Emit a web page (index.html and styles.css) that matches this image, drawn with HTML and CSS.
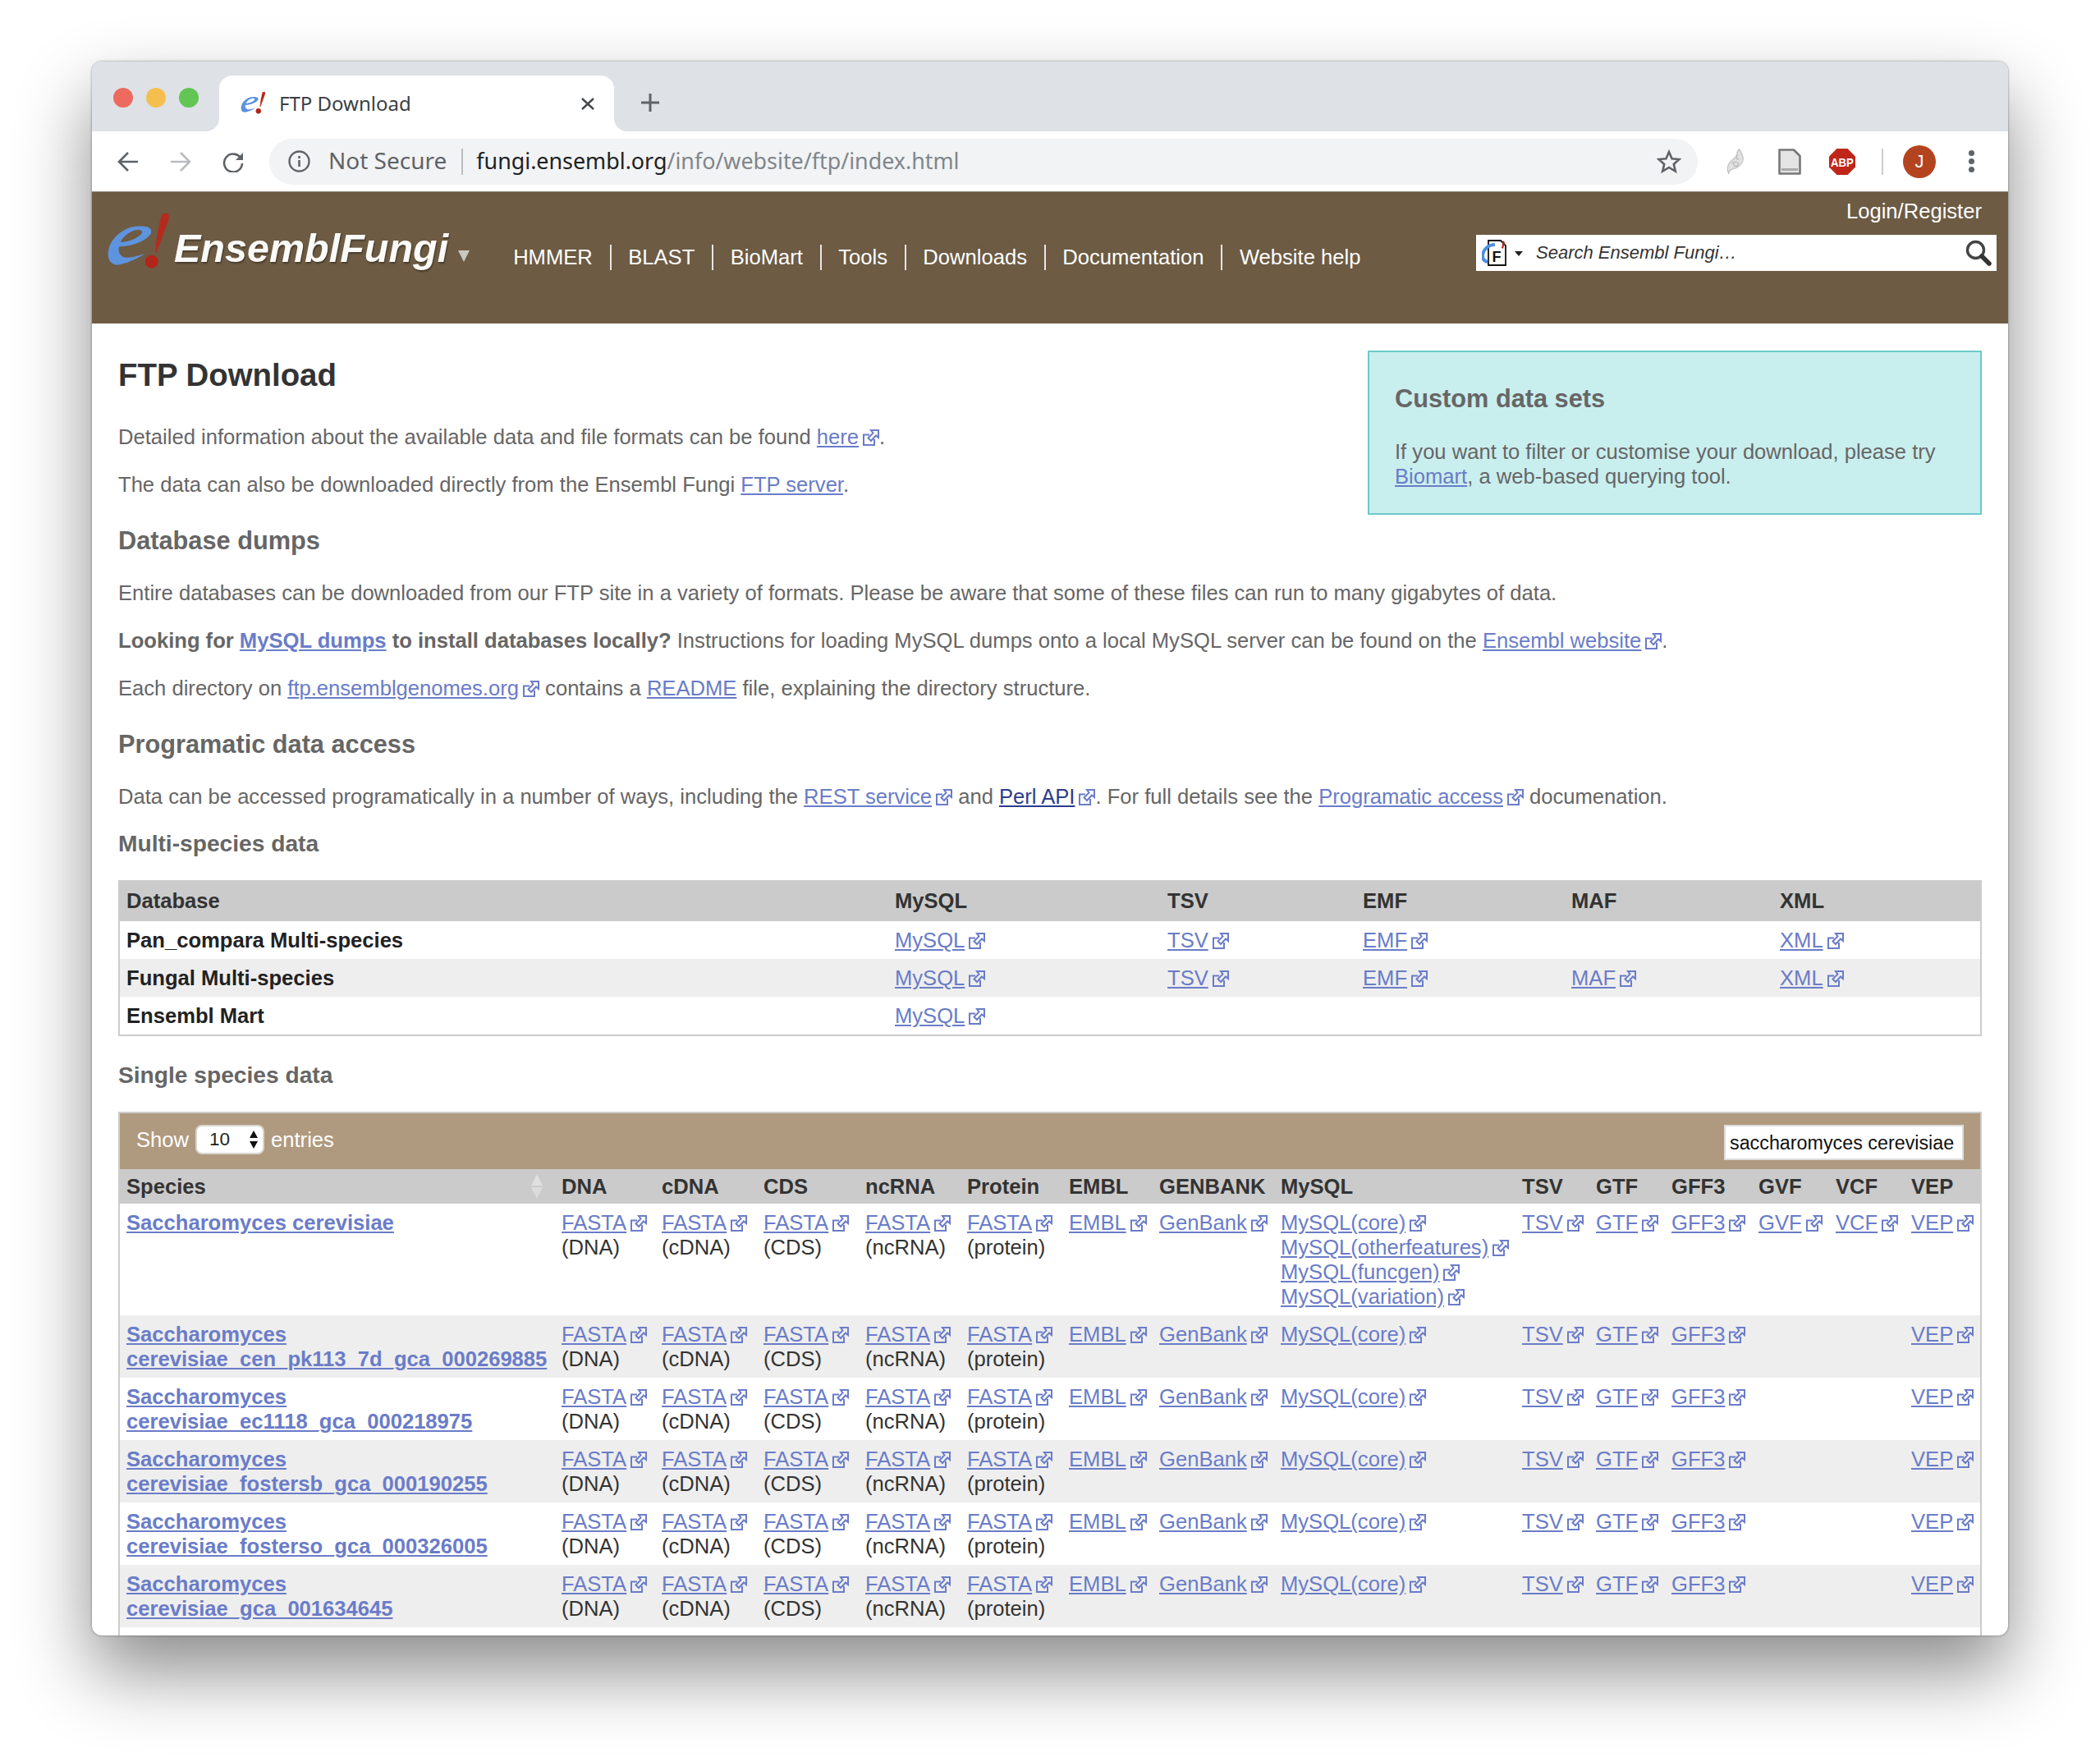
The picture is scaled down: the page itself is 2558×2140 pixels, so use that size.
FILE: index.html
```html
<!DOCTYPE html>
<html lang="en">
<head>
    <meta charset="UTF-8">
    <title>FTP Download</title>
    <link rel="stylesheet" href="styles.css">
</head>

<body>
    <svg class="defs" width="0" height="0">
        <symbol id="ext" viewBox="0 0 20 20">
            <path d="M8 6.5H1V19H14V12" fill="none" stroke="#6a7cc8" stroke-width="2"/>
            <path d="M10 1H19V10L16 7.5 10 14 6.5 10.5 12.5 4.5Z" fill="none" stroke="#6a7cc8" stroke-width="2"/>
        </symbol>
        <symbol id="elogo" viewBox="25 35 235 215">
            <path fill-rule="evenodd" fill="#5e93dd" d="M165 190C130 215 90 228 65 232C35 232 25 205 32 175C42 130 90 92 140 90C170 88 195 95 188 115C178 140 120 165 70 165C66 185 75 205 100 205C125 205 150 195 165 190ZM75 148C110 148 150 128 155 112C155 100 130 102 115 110C95 120 82 135 75 148Z"/>
            <path d="M226 50Q238 36 252 46Q256 60 246 82L208 185H203Q208 120 226 50Z" fill="#b52a1d"/>
            <circle cx="190" cy="220" r="24" fill="#b32519"/>
        </symbol>
    </svg>

    <div class="window">
        <div class="tabstrip">
            <div class="lights">
                <span class="light red"></span>
                <span class="light yellow"></span>
                <span class="light green"></span>
            </div>
            <div class="tab">
                <svg class="favicon"><use href="#elogo"/></svg>
                <span class="tab-title">FTP Download</span>
                <svg class="tab-close" viewBox="0 0 18 15" preserveAspectRatio="none"><path d="M2 1L16 14M16 1L2 14" stroke="#45484c" stroke-width="2.4"/></svg>
            </div>
            <svg class="newtab" viewBox="0 0 24 24"><path d="M12 1V23M1 12H23" stroke="#5f6368" stroke-width="3"/></svg>
        </div>

        <div class="toolbar">
            <svg class="navbtn" viewBox="0 0 26 26"><path d="M25 13H3M13 2L2 13L13 24" fill="none" stroke="#5f6368" stroke-width="2.6"/></svg>
            <svg class="navbtn" viewBox="0 0 26 26"><path d="M1 13H23M13 2L24 13L13 24" fill="none" stroke="#b9bbbe" stroke-width="2.6"/></svg>
            <svg class="navbtn" viewBox="0 0 26 26"><path d="M22.5 9A11 11 0 1 0 24 15" fill="none" stroke="#5f6368" stroke-width="2.6"/><path d="M25 2V11H16Z" fill="#5f6368"/></svg>
            <div class="omnibox">
                <svg class="info" viewBox="0 0 27 27"><circle cx="13.5" cy="13.5" r="12" fill="none" stroke="#5f6368" stroke-width="2.4"/><path d="M13.5 12V20M13.5 7V10" stroke="#5f6368" stroke-width="2.6"/></svg>
                <span class="not-secure">Not Secure</span>
                <span class="omni-sep"></span>
                <span class="url">fungi.ensembl.org<span class="url-path">/info/website/ftp/index.html</span></span>
                <svg class="star" viewBox="0 0 30 30"><path d="M15 3L18.6 11.2 27.5 12 20.8 17.9 22.8 26.6 15 22 7.2 26.6 9.2 17.9 2.5 12 11.4 11.2Z" fill="none" stroke="#5f6368" stroke-width="2.6"/></svg>
            </div>
            <svg class="feather" viewBox="0 0 22 32"><path d="M16 1C18 6 21 9 20 14C19 20 12 24 7 25C4 26 2 29 3 31C0 26 1 20 5 16C8 13 13 10 13 6C13 4 14 2 16 1Z" fill="#e2e2e2" stroke="#c4c4c4" stroke-width="1.4"/><path d="M6 18C10 15 16 16 14 20C12 23 8 21 9 18M14 8C11 10 12 13 15 13" fill="none" stroke="#bdbdbd" stroke-width="1.5"/></svg>
            <svg class="docicon" viewBox="0 0 28 32"><path d="M1.5 1.5H19L26.5 9V30.5H1.5Z" fill="#e4e4e4" stroke="#777" stroke-width="2.6" stroke-linejoin="round"/><path d="M4 24H24V27H4Z" fill="#aaa"/></svg>
            <svg class="abp" viewBox="0 0 32 32"><path d="M9.5 0H22.5L32 9.5V22.5L22.5 32H9.5L0 22.5V9.5Z" fill="#bf2619"/><text text-anchor="middle" transform="translate(16 21.5) scale(.85 1)" class="abp-text">ABP</text></svg>
            <span class="tool-sep"></span>
            <span class="avatar">J</span>
            <span class="dots"><i></i><i></i><i></i></span>
        </div>

        <div class="masthead">
            <div class="logo">
                <svg class="logo-mark"><use href="#elogo"/></svg>
                <span class="logo-text">EnsemblFungi</span>
                <span class="logo-arrow"></span>
            </div>
            <div class="mainnav">
                <a>HMMER</a>
                <a>BLAST</a>
                <a>BioMart</a>
                <a>Tools</a>
                <a>Downloads</a>
                <a>Documentation</a>
                <a>Website help</a>
            </div>
            <div class="mast-right">
                <a class="login">Login/Register</a>
                <div class="searchbox">
                    <svg class="search-site" viewBox="0 0 30 32">
                        <path d="M8 1H23L29 7V31H8Z" fill="#fff" stroke="#111" stroke-width="1.8"/>
                        <path d="M16 6C8 6 1 12 1 20C1 24 3 26 7 27" fill="none" stroke="#4d8fe0" stroke-width="4"/>
                        <path d="M26 1L28 3 26 11 24 10Z" fill="#b52a1d"/>
                        <text x="18" y="27" text-anchor="middle" class="search-f">F</text>
                    </svg>
                    <span class="search-caret"></span>
                    <span class="search-hint">Search Ensembl Fungi…</span>
                    <svg class="search-glass" viewBox="0 0 32 32"><circle cx="12.5" cy="12.5" r="10" fill="#fff" stroke="#444" stroke-width="3.4"/><path d="M20 20L29 29" stroke="#333" stroke-width="5.5" stroke-linecap="round"/></svg>
                </div>
            </div>
        </div>

        <div class="content">
            <div class="custom-box">
                <h2>Custom data sets</h2>
                <p>If you want to filter or customise your download, please try <a href="#">Biomart</a>, a web-based querying tool.</p>
            </div>

            <h1>FTP Download</h1>
            <p>Detailed information about the available data and file formats can be found <a href="#">here</a><svg class="ext"><use href="#ext"/></svg>.</p>
            <p>The data can also be downloaded directly from the Ensembl Fungi <a href="#">FTP server</a>.</p>

            <h2>Database dumps</h2>
            <p>Entire databases can be downloaded from our FTP site in a variety of formats. Please be aware that some of these files can run to many gigabytes of data.</p>
            <p><b>Looking for <a href="#">MySQL dumps</a> to install databases locally?</b> Instructions for loading MySQL dumps onto a local MySQL server can be found on the <a href="#">Ensembl website</a><svg class="ext"><use href="#ext"/></svg>.</p>
            <p>Each directory on <a href="#">ftp.ensemblgenomes.org</a><svg class="ext"><use href="#ext"/></svg> contains a <a href="#">README</a> file, explaining the directory structure.</p>

            <h2>Programatic data access</h2>
            <p>Data can be accessed programatically in a number of ways, including the <a href="#">REST service</a><svg class="ext"><use href="#ext"/></svg> and <a href="#" class="visited">Perl API</a><svg class="ext"><use href="#ext"/></svg>. For full details see the <a href="#">Programatic access</a><svg class="ext"><use href="#ext"/></svg> documenation.</p>

            <h3 class="table-title">Multi-species data</h3>
            <div class="table-wrap multi">
                <table>
                    <colgroup>
                        <col class="m-db"><col class="m-mysql"><col class="m-tsv"><col class="m-emf"><col class="m-maf"><col class="m-xml">
                    </colgroup>
                    <tr><th>Database</th><th>MySQL</th><th>TSV</th><th>EMF</th><th>MAF</th><th>XML</th></tr>
                    <tr>
                        <td class="name">Pan_compara Multi-species</td>
                        <td><a href="#">MySQL</a><svg class="ext"><use href="#ext"/></svg></td>
                        <td><a href="#">TSV</a><svg class="ext"><use href="#ext"/></svg></td>
                        <td><a href="#">EMF</a><svg class="ext"><use href="#ext"/></svg></td>
                        <td></td>
                        <td><a href="#">XML</a><svg class="ext"><use href="#ext"/></svg></td>
                    </tr>
                    <tr class="stripe">
                        <td class="name">Fungal Multi-species</td>
                        <td><a href="#">MySQL</a><svg class="ext"><use href="#ext"/></svg></td>
                        <td><a href="#">TSV</a><svg class="ext"><use href="#ext"/></svg></td>
                        <td><a href="#">EMF</a><svg class="ext"><use href="#ext"/></svg></td>
                        <td><a href="#">MAF</a><svg class="ext"><use href="#ext"/></svg></td>
                        <td><a href="#">XML</a><svg class="ext"><use href="#ext"/></svg></td>
                    </tr>
                    <tr>
                        <td class="name">Ensembl Mart</td>
                        <td><a href="#">MySQL</a><svg class="ext"><use href="#ext"/></svg></td>
                        <td></td>
                        <td></td>
                        <td></td>
                        <td></td>
                    </tr>
                </table>
            </div>

            <h3 class="table-title single">Single species data</h3>
            <div class="table-wrap species">
                <div class="dt-bar">
                    <div class="dt-length">
                        <span>Show</span>
                        <span class="dt-select">10<svg viewBox="0 0 10 22"><path d="M5 0L10 9H0ZM5 22L0 13H10Z" fill="#111"/></svg></span>
                        <span>entries</span>
                    </div>
                    <div class="dt-filter">saccharomyces cerevisiae</div>
                </div>
                <table>
                    <colgroup>
                        <col class="s-species"><col class="s-dna"><col class="s-seq"><col class="s-seq"><col class="s-seq"><col class="s-seq"><col class="s-embl"><col class="s-genbank"><col class="s-mysql"><col class="s-tsv"><col class="s-gtf"><col class="s-gff"><col class="s-gvf"><col class="s-vcf"><col class="s-vep">
                    </colgroup>
                    <tr class="dt-head">
                        <th><span class="sortable">Species<svg class="sort" viewBox="0 0 14 30"><path d="M7 0L14 14H0Z" fill="#e0e0e0"/><path d="M7 30L0 16H14Z" fill="#dcdcdc"/></svg></span></th>
                        <th>DNA</th><th>cDNA</th><th>CDS</th><th>ncRNA</th><th>Protein</th><th>EMBL</th><th>GENBANK</th><th>MySQL</th><th>TSV</th><th>GTF</th><th>GFF3</th><th>GVF</th><th>VCF</th><th>VEP</th>
                    </tr>
                    <tr>
                        <td class="name"><a href="#">Saccharomyces cerevisiae</a></td>
                        <td><a href="#">FASTA</a><svg class="ext"><use href="#ext"/></svg><br>(DNA)</td>
                        <td><a href="#">FASTA</a><svg class="ext"><use href="#ext"/></svg><br>(cDNA)</td>
                        <td><a href="#">FASTA</a><svg class="ext"><use href="#ext"/></svg><br>(CDS)</td>
                        <td><a href="#">FASTA</a><svg class="ext"><use href="#ext"/></svg><br>(ncRNA)</td>
                        <td><a href="#">FASTA</a><svg class="ext"><use href="#ext"/></svg><br>(protein)</td>
                        <td><a href="#">EMBL</a><svg class="ext"><use href="#ext"/></svg></td>
                        <td><a href="#">GenBank</a><svg class="ext"><use href="#ext"/></svg></td>
                        <td><a href="#">MySQL(core)</a><svg class="ext"><use href="#ext"/></svg><br><a href="#">MySQL(otherfeatures)</a><svg class="ext"><use href="#ext"/></svg><br><a href="#">MySQL(funcgen)</a><svg class="ext"><use href="#ext"/></svg><br><a href="#">MySQL(variation)</a><svg class="ext"><use href="#ext"/></svg></td>
                        <td><a href="#">TSV</a><svg class="ext"><use href="#ext"/></svg></td>
                        <td><a href="#">GTF</a><svg class="ext"><use href="#ext"/></svg></td>
                        <td><a href="#">GFF3</a><svg class="ext"><use href="#ext"/></svg></td>
                        <td><a href="#">GVF</a><svg class="ext"><use href="#ext"/></svg></td>
                        <td><a href="#">VCF</a><svg class="ext"><use href="#ext"/></svg></td>
                        <td><a href="#">VEP</a><svg class="ext"><use href="#ext"/></svg></td>
                    </tr>
                    <tr class="stripe">
                        <td class="name"><a href="#">Saccharomyces cerevisiae_cen_pk113_7d_gca_000269885</a></td>
                        <td><a href="#">FASTA</a><svg class="ext"><use href="#ext"/></svg><br>(DNA)</td>
                        <td><a href="#">FASTA</a><svg class="ext"><use href="#ext"/></svg><br>(cDNA)</td>
                        <td><a href="#">FASTA</a><svg class="ext"><use href="#ext"/></svg><br>(CDS)</td>
                        <td><a href="#">FASTA</a><svg class="ext"><use href="#ext"/></svg><br>(ncRNA)</td>
                        <td><a href="#">FASTA</a><svg class="ext"><use href="#ext"/></svg><br>(protein)</td>
                        <td><a href="#">EMBL</a><svg class="ext"><use href="#ext"/></svg></td>
                        <td><a href="#">GenBank</a><svg class="ext"><use href="#ext"/></svg></td>
                        <td><a href="#">MySQL(core)</a><svg class="ext"><use href="#ext"/></svg></td>
                        <td><a href="#">TSV</a><svg class="ext"><use href="#ext"/></svg></td>
                        <td><a href="#">GTF</a><svg class="ext"><use href="#ext"/></svg></td>
                        <td><a href="#">GFF3</a><svg class="ext"><use href="#ext"/></svg></td>
                        <td></td>
                        <td></td>
                        <td><a href="#">VEP</a><svg class="ext"><use href="#ext"/></svg></td>
                    </tr>
                    <tr>
                        <td class="name"><a href="#">Saccharomyces cerevisiae_ec1118_gca_000218975</a></td>
                        <td><a href="#">FASTA</a><svg class="ext"><use href="#ext"/></svg><br>(DNA)</td>
                        <td><a href="#">FASTA</a><svg class="ext"><use href="#ext"/></svg><br>(cDNA)</td>
                        <td><a href="#">FASTA</a><svg class="ext"><use href="#ext"/></svg><br>(CDS)</td>
                        <td><a href="#">FASTA</a><svg class="ext"><use href="#ext"/></svg><br>(ncRNA)</td>
                        <td><a href="#">FASTA</a><svg class="ext"><use href="#ext"/></svg><br>(protein)</td>
                        <td><a href="#">EMBL</a><svg class="ext"><use href="#ext"/></svg></td>
                        <td><a href="#">GenBank</a><svg class="ext"><use href="#ext"/></svg></td>
                        <td><a href="#">MySQL(core)</a><svg class="ext"><use href="#ext"/></svg></td>
                        <td><a href="#">TSV</a><svg class="ext"><use href="#ext"/></svg></td>
                        <td><a href="#">GTF</a><svg class="ext"><use href="#ext"/></svg></td>
                        <td><a href="#">GFF3</a><svg class="ext"><use href="#ext"/></svg></td>
                        <td></td>
                        <td></td>
                        <td><a href="#">VEP</a><svg class="ext"><use href="#ext"/></svg></td>
                    </tr>
                    <tr class="stripe">
                        <td class="name"><a href="#">Saccharomyces cerevisiae_fostersb_gca_000190255</a></td>
                        <td><a href="#">FASTA</a><svg class="ext"><use href="#ext"/></svg><br>(DNA)</td>
                        <td><a href="#">FASTA</a><svg class="ext"><use href="#ext"/></svg><br>(cDNA)</td>
                        <td><a href="#">FASTA</a><svg class="ext"><use href="#ext"/></svg><br>(CDS)</td>
                        <td><a href="#">FASTA</a><svg class="ext"><use href="#ext"/></svg><br>(ncRNA)</td>
                        <td><a href="#">FASTA</a><svg class="ext"><use href="#ext"/></svg><br>(protein)</td>
                        <td><a href="#">EMBL</a><svg class="ext"><use href="#ext"/></svg></td>
                        <td><a href="#">GenBank</a><svg class="ext"><use href="#ext"/></svg></td>
                        <td><a href="#">MySQL(core)</a><svg class="ext"><use href="#ext"/></svg></td>
                        <td><a href="#">TSV</a><svg class="ext"><use href="#ext"/></svg></td>
                        <td><a href="#">GTF</a><svg class="ext"><use href="#ext"/></svg></td>
                        <td><a href="#">GFF3</a><svg class="ext"><use href="#ext"/></svg></td>
                        <td></td>
                        <td></td>
                        <td><a href="#">VEP</a><svg class="ext"><use href="#ext"/></svg></td>
                    </tr>
                    <tr>
                        <td class="name"><a href="#">Saccharomyces cerevisiae_fosterso_gca_000326005</a></td>
                        <td><a href="#">FASTA</a><svg class="ext"><use href="#ext"/></svg><br>(DNA)</td>
                        <td><a href="#">FASTA</a><svg class="ext"><use href="#ext"/></svg><br>(cDNA)</td>
                        <td><a href="#">FASTA</a><svg class="ext"><use href="#ext"/></svg><br>(CDS)</td>
                        <td><a href="#">FASTA</a><svg class="ext"><use href="#ext"/></svg><br>(ncRNA)</td>
                        <td><a href="#">FASTA</a><svg class="ext"><use href="#ext"/></svg><br>(protein)</td>
                        <td><a href="#">EMBL</a><svg class="ext"><use href="#ext"/></svg></td>
                        <td><a href="#">GenBank</a><svg class="ext"><use href="#ext"/></svg></td>
                        <td><a href="#">MySQL(core)</a><svg class="ext"><use href="#ext"/></svg></td>
                        <td><a href="#">TSV</a><svg class="ext"><use href="#ext"/></svg></td>
                        <td><a href="#">GTF</a><svg class="ext"><use href="#ext"/></svg></td>
                        <td><a href="#">GFF3</a><svg class="ext"><use href="#ext"/></svg></td>
                        <td></td>
                        <td></td>
                        <td><a href="#">VEP</a><svg class="ext"><use href="#ext"/></svg></td>
                    </tr>
                    <tr class="stripe">
                        <td class="name"><a href="#">Saccharomyces cerevisiae_gca_001634645</a></td>
                        <td><a href="#">FASTA</a><svg class="ext"><use href="#ext"/></svg><br>(DNA)</td>
                        <td><a href="#">FASTA</a><svg class="ext"><use href="#ext"/></svg><br>(cDNA)</td>
                        <td><a href="#">FASTA</a><svg class="ext"><use href="#ext"/></svg><br>(CDS)</td>
                        <td><a href="#">FASTA</a><svg class="ext"><use href="#ext"/></svg><br>(ncRNA)</td>
                        <td><a href="#">FASTA</a><svg class="ext"><use href="#ext"/></svg><br>(protein)</td>
                        <td><a href="#">EMBL</a><svg class="ext"><use href="#ext"/></svg></td>
                        <td><a href="#">GenBank</a><svg class="ext"><use href="#ext"/></svg></td>
                        <td><a href="#">MySQL(core)</a><svg class="ext"><use href="#ext"/></svg></td>
                        <td><a href="#">TSV</a><svg class="ext"><use href="#ext"/></svg></td>
                        <td><a href="#">GTF</a><svg class="ext"><use href="#ext"/></svg></td>
                        <td><a href="#">GFF3</a><svg class="ext"><use href="#ext"/></svg></td>
                        <td></td>
                        <td></td>
                        <td><a href="#">VEP</a><svg class="ext"><use href="#ext"/></svg></td>
                    </tr>
                </table>
            </div>
        </div>
    </div>
</body>
</html>
```

FILE: styles.css
```css
html, body {
    margin: 0;
    height: 2140px;
    overflow: hidden;
    background: #fff;
}
body {
    font-family: "Liberation Sans", Arial, sans-serif;
    font-size: 25.6px;
    line-height: 30px;
    color: #666;
}
.defs {
    display: block;
    height: 0;
}

/* browser chrome */
.window {
    display: flex;
    flex-direction: column;
    box-sizing: border-box;
    width: 2334px;
    height: 1917px;
    margin: 75px 0 0 112px;
    border-radius: 12px;
    overflow: hidden;
    background: #fff;
    box-shadow: 0 44px 90px rgba(0, 0, 0, .46), 0 0 3px rgba(0, 0, 0, .45);
}
.tabstrip {
    display: flex;
    align-items: flex-end;
    flex: none;
    height: 85px;
    background: #dee1e6;
}
.lights {
    display: flex;
    gap: 16px;
    align-self: flex-start;
    margin: 32px 0 0 26px;
}
.light {
    width: 24px;
    height: 24px;
    border-radius: 50%;
}
.red { background: #ed6a5e; }
.yellow { background: #f5bf4f; }
.green { background: #62c554; }
.tab {
    position: relative;
    display: flex;
    align-items: center;
    box-sizing: border-box;
    width: 481px;
    height: 68px;
    margin-left: 25px;
    padding: 0 23px 0 26px;
    background: #fff;
    border-radius: 16px 16px 0 0;
}
.tab::before, .tab::after {
    content: "";
    position: absolute;
    bottom: 0;
    width: 16px;
    height: 16px;
    background: #dee1e6;
}
.tab::before {
    left: -16px;
    border-radius: 0 0 16px 0;
    box-shadow: 8px 8px 0 8px #fff;
    clip-path: inset(0);
}
.tab::after {
    right: -16px;
    border-radius: 0 0 0 16px;
    box-shadow: -8px 8px 0 8px #fff;
    clip-path: inset(0);
}
.favicon {
    width: 31px;
    height: 32px;
    margin-top: -2px;
}
.tab-title {
    margin-left: 16px;
    font-family: "Noto Sans", sans-serif;
    font-size: 24px;
    color: #3c4043;
}
.tab-close {
    width: 18px;
    height: 15px;
    margin-left: auto;
}
.newtab {
    width: 24px;
    height: 24px;
    margin: 0 0 23px 32px;
}
.toolbar {
    display: flex;
    align-items: center;
    flex: none;
    height: 73px;
    padding-left: 31px;
    background: #fff;
}
.navbtn {
    width: 26px;
    height: 26px;
    margin-right: 38px;
}
.navbtn:nth-child(3) {
    margin-right: 31px;
}
.omnibox {
    display: flex;
    align-items: center;
    box-sizing: border-box;
    width: 1740px;
    height: 56px;
    padding: 0 20px 0 23px;
    border-radius: 28px;
    background: #f1f3f4;
    font-family: "Noto Sans", sans-serif;
    font-size: 28px;
}
.info {
    width: 27px;
    height: 27px;
    margin-right: 22px;
}
.not-secure {
    margin-bottom: 3px;
    color: #5f6368;
}
.omni-sep {
    width: 2px;
    height: 32px;
    margin: 0 16px 0 18px;
    background: #bbbdc0;
}
.url {
    margin-bottom: 2px;
    font-size: 26.85px;
    color: #202124;
}
.url-path {
    color: #80868b;
}
.star {
    width: 30px;
    height: 30px;
    margin-left: auto;
}
.feather {
    width: 22px;
    height: 32px;
    margin-left: 35px;
}
.docicon {
    width: 28px;
    height: 32px;
    margin-left: 41px;
}
.abp {
    width: 32px;
    height: 32px;
    margin-left: 34px;
}
.abp-text {
    font-family: "Liberation Sans", sans-serif;
    font-weight: bold;
    font-size: 15.5px;
    fill: #fff;
}
.tool-sep {
    width: 2px;
    height: 32px;
    margin-left: 32px;
    background: #ccc;
}
.avatar {
    width: 40px;
    height: 40px;
    margin-left: 24px;
    border-radius: 50%;
    background: #b4441f;
    color: #fff;
    font-size: 22px;
    line-height: 40px;
    text-align: center;
}
.dots {
    display: flex;
    flex-direction: column;
    gap: 3px;
    margin-left: 40px;
}
.dots i {
    width: 7px;
    height: 7px;
    border-radius: 50%;
    background: #5f6368;
}

/* ensembl masthead */
.masthead {
    display: flex;
    flex: none;
    box-sizing: border-box;
    height: 161px;
    padding-left: 18px;
    background: #6d5b43;
    border-top: 1px solid #8f8577;
    color: #fff;
}
.logo {
    display: flex;
    align-items: flex-start;
    padding-top: 23px;
}
.logo-mark {
    width: 78px;
    height: 72px;
}
.logo-text {
    margin: 17px 0 0 4px;
    font-size: 48.5px;
    line-height: 56px;
    font-weight: bold;
    font-style: italic;
    color: #fafaf8;
    text-shadow: 1px 2px 2px rgba(0, 0, 0, .35);
}
.logo-arrow {
    width: 0;
    height: 0;
    margin: 48px 0 0 12px;
    border-left: 7px solid transparent;
    border-right: 7px solid transparent;
    border-top: 14px solid #cbc7bf;
}
.mainnav {
    display: flex;
    align-self: flex-start;
    margin: 64px 0 0 53px;
}
.mainnav a {
    height: 31px;
    padding: 0 20.7px;
    border-right: 2px solid rgba(255, 255, 255, .85);
    line-height: 31px;
}
.mainnav a:first-child {
    padding-left: 0;
}
.mainnav a:last-child {
    border-right: 0;
}
.mast-right {
    display: flex;
    flex-direction: column;
    align-items: flex-end;
    margin-left: auto;
    padding: 8px 14px 0 0;
}
.login {
    margin-right: 18px;
}
.searchbox {
    display: flex;
    align-items: center;
    box-sizing: border-box;
    width: 634px;
    height: 44px;
    margin-top: 14px;
    padding: 0 6px 0 7px;
    background: #fff;
}
.search-site {
    width: 30px;
    height: 32px;
}
.search-f {
    font-family: "Liberation Sans", sans-serif;
    font-weight: bold;
    font-size: 18px;
    fill: #111;
}
.search-caret {
    width: 0;
    height: 0;
    margin: 2px 16px 0 10px;
    border-left: 5.5px solid transparent;
    border-right: 5.5px solid transparent;
    border-top: 6px solid #222;
}
.search-hint {
    font-size: 22px;
    font-style: italic;
    color: #333;
}
.search-glass {
    width: 32px;
    height: 32px;
    margin-left: auto;
}

/* page */
.content {
    flex: 1;
    min-height: 0;
    padding: 33px 32px 0;
    overflow: hidden;
}
.content a {
    color: #6a7cc8;
    text-decoration: underline;
}
.content a.visited {
    color: #2c3c8c;
}
h1 {
    margin: 5px 0 35px;
    font-size: 38.4px;
    line-height: 50px;
    color: #333;
}
h2 {
    margin: 30px 0 24px;
    font-size: 30.72px;
    line-height: 48px;
    color: #666;
}
h3 {
    margin: 0;
    font-size: 28.16px;
    line-height: 30px;
    color: #666;
}
p {
    margin: 0 0 28px;
}
.ext {
    width: 20px;
    height: 20px;
    margin-left: 5px;
    vertical-align: -2px;
}
.custom-box {
    float: right;
    box-sizing: border-box;
    width: 748px;
    height: 200px;
    padding: 37px 31px 0;
    background: #c9eeee;
    border: 2px solid #6cc9c9;
}
.custom-box h2 {
    margin: 0 0 29px;
    line-height: 40px;
}
.custom-box p {
    margin: 0;
}
.table-title {
    margin-bottom: 29px;
}
.table-title.single {
    margin-top: 33px;
}

/* tables */
.table-wrap {
    box-sizing: border-box;
    border: 2px solid #ccc;
}
.table-wrap.multi {
    border-top: 0;
}
.table-wrap.species {
    padding-bottom: 60px;
}
table {
    width: 100%;
    table-layout: fixed;
    border-collapse: collapse;
    color: #333;
}
th {
    padding: 10px 8px;
    background: #cbcbcb;
    text-align: left;
    white-space: nowrap;
}
td {
    padding: 8px;
    vertical-align: top;
    white-space: nowrap;
}
td.name {
    font-weight: bold;
    color: #222;
    white-space: normal;
}
.stripe td {
    background: #eee;
}
.m-db { width: 936px; }
.m-mysql { width: 332px; }
.m-tsv { width: 238px; }
.m-emf { width: 254px; }
.m-maf { width: 254px; }
.m-xml { width: 252px; }
.s-species { width: 530px; }
.s-dna { width: 122px; }
.s-seq { width: 124px; }
.s-embl { width: 110px; }
.s-genbank { width: 148px; }
.s-mysql { width: 294px; }
.s-tsv { width: 90px; }
.s-gtf { width: 92px; }
.s-gff { width: 106px; }
.s-gvf { width: 94px; }
.s-vcf { width: 92px; }
.s-vep { width: 92px; }
.dt-bar {
    display: flex;
    justify-content: space-between;
    align-items: flex-start;
    box-sizing: border-box;
    height: 68px;
    padding: 14px 20px 0;
    background: #b09a7f;
    color: #fff;
}
.dt-length {
    display: flex;
    align-items: center;
    gap: 8px;
    height: 36px;
}
.dt-select {
    display: flex;
    align-items: center;
    justify-content: space-between;
    box-sizing: border-box;
    width: 84px;
    height: 36px;
    padding: 0 6px 0 15px;
    background: #fff;
    border: 2px solid #d9d6d0;
    border-radius: 8px;
    color: #222;
    font-size: 22.5px;
}
.dt-select svg {
    width: 10px;
    height: 22px;
}
.dt-filter {
    box-sizing: border-box;
    width: 292px;
    height: 43px;
    padding-left: 5px;
    background: #fff;
    border: 2px solid #ddd;
    color: #111;
    font-size: 23.3px;
    line-height: 41px;
}
.dt-head th {
    padding: 6px 8px;
}
.sortable {
    display: flex;
    align-items: center;
    justify-content: space-between;
}
.sort {
    width: 14px;
    height: 30px;
    margin-right: 7px;
}
```
